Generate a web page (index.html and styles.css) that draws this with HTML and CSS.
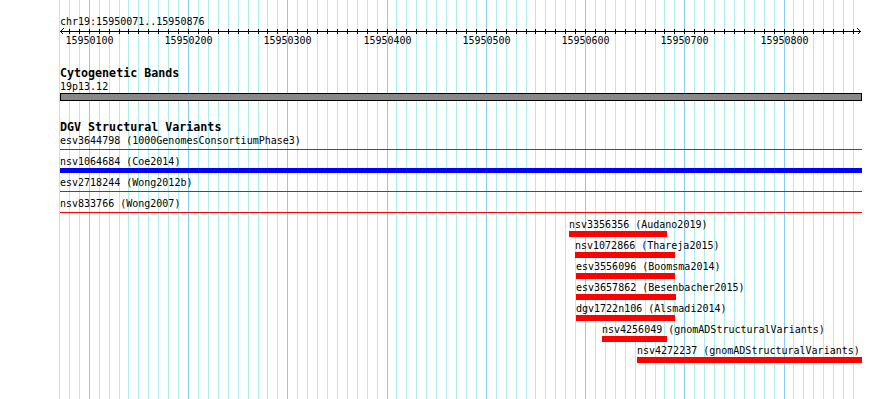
FILE: index.html
```html
<!DOCTYPE html>
<html lang="en">
<head>
    <meta charset="UTF-8">
    <title>chr19:15950071..15950876</title>
    <link rel="stylesheet" href="styles.css">
</head>
<body>
    <div class="browser">
        <div class="grid" id="grid"></div>

        <section class="track ruler-track">
            <div class="label">chr19:15950071..15950876</div>
            <svg class="ruler" id="ruler" width="802" height="20"></svg>
        </section>

        <section class="track band-track">
            <h2 class="track-title">Cytogenetic Bands</h2>
            <div class="label">19p13.12</div>
            <div class="band"></div>
        </section>

        <section class="track sv-track">
            <h2 class="track-title">DGV Structural Variants</h2>

            <div class="sv">
                <div class="label">esv3644798 (1000GenomesConsortiumPhase3)</div>
                <div class="sv-line"></div>
            </div>
            <div class="sv">
                <div class="label">nsv1064684 (Coe2014)</div>
                <div class="sv-bar gain"></div>
            </div>
            <div class="sv">
                <div class="label">esv2718244 (Wong2012b)</div>
                <div class="sv-line"></div>
            </div>
            <div class="sv">
                <div class="label">nsv833766 (Wong2007)</div>
                <div class="sv-line"></div>
            </div>

            <div class="sv" style="margin-left: 509px; width: 98px;">
                <div class="label">nsv3356356 (Audano2019)</div>
                <div class="sv-bar"></div>
            </div>
            <div class="sv" style="margin-left: 515px; width: 100px;">
                <div class="label">nsv1072866 (Thareja2015)</div>
                <div class="sv-bar"></div>
            </div>
            <div class="sv" style="margin-left: 516px; width: 99px;">
                <div class="label">esv3556096 (Boomsma2014)</div>
                <div class="sv-bar"></div>
            </div>
            <div class="sv" style="margin-left: 516px; width: 100px;">
                <div class="label">esv3657862 (Besenbacher2015)</div>
                <div class="sv-bar"></div>
            </div>
            <div class="sv" style="margin-left: 516px; width: 99px;">
                <div class="label">dgv1722n106 (Alsmadi2014)</div>
                <div class="sv-bar"></div>
            </div>
            <div class="sv" style="margin-left: 542px; width: 65px;">
                <div class="label">nsv4256049 (gnomADStructuralVariants)</div>
                <div class="sv-bar"></div>
            </div>
            <div class="sv" style="margin-left: 577px; width: 225px;">
                <div class="label">nsv4272237 (gnomADStructuralVariants)</div>
                <div class="sv-bar"></div>
            </div>
        </section>
    </div>

    <script src="script.js"></script>
</body>
</html>
```

FILE: styles.css
```css
body {
    margin: 0;
    background: #fff;
    color: #000;
    font-family: "DejaVu Sans Mono", "Liberation Mono", monospace;
    font-size: 10px;
    line-height: 13px;
}

.browser {
    position: relative;
    width: 802px;
    min-height: 399px;
    padding-left: 60px;
    overflow: hidden;
}

/* vertical grid behind all tracks */
.grid {
    position: absolute;
    top: 0;
    bottom: 0;
    left: 0;
    right: 0;
    z-index: 0;
}

.grid-line {
    position: absolute;
    top: 0;
    bottom: 0;
    width: 1px;
    background: #afeeee;
}

.grid-line.major {
    background: #87cefa;
}

.track {
    position: relative;
    z-index: 1;
}

.track-title {
    margin: 0;
    font-size: 11.67px;
    font-weight: bold;
    line-height: 13px;
}

.label {
    height: 13px;
    white-space: nowrap;
}

/* ruler */
.ruler-track {
    padding-top: 15px;
}

.ruler {
    display: block;
    overflow: visible;
    shape-rendering: crispEdges;
}

.ruler line,
.ruler polyline {
    stroke: #000;
    stroke-width: 1;
    fill: none;
}

.ruler text {
    font-family: "DejaVu Sans Mono", "Liberation Mono", monospace;
    font-size: 10px;
    fill: #000;
}

/* cytoband */
.band-track {
    margin-top: 19px;
}

.band {
    height: 6px;
    border: 1px solid #000;
    background: #888;
}

/* structural variants */
.sv-track {
    margin-top: 20px;
}

.sv {
    height: 21px;
}

.sv-line {
    height: 1px;
    margin-top: 2px;
    background: #f00;
}

.sv-bar {
    height: 6px;
    background: #f00;
}

.sv-bar.gain {
    height: 5px;
    background: #00f;
}
```

FILE: script.js
```js
const start = 15950071;
const end = 15950876;
const origin = 60;
const scale = 800 / (end - start + 1);

const grid = document.getElementById('grid');
const ruler = document.getElementById('ruler');
const ns = 'http://www.w3.org/2000/svg';

function toX(bp) {
    return Math.round(origin + (bp - start) * scale);
}

function svgEl(name, attrs, text) {
    const el = document.createElementNS(ns, name);
    for (const key in attrs) el.setAttribute(key, attrs[key]);
    if (text) el.textContent = text;
    ruler.appendChild(el);
    return el;
}

// ruler baseline with arrows at both ends
svgEl('line', { x1: 0, y1: 3.5, x2: 801, y2: 3.5 });
svgEl('polyline', { points: '3.5,0.5 0.5,3.5 3.5,6.5' });
svgEl('polyline', { points: '797.5,0.5 800.5,3.5 797.5,6.5' });

for (let bp = 15950070; bp <= end; bp += 10) {
    const x = toX(bp);
    const major = bp % 100 === 0;

    const line = document.createElement('div');
    line.className = major ? 'grid-line major' : 'grid-line';
    line.style.left = x + 'px';
    grid.appendChild(line);

    if (x < origin) continue;
    const rx = x - origin + 0.5;
    svgEl('line', { x1: rx, y1: 1, x2: rx, y2: 6 });

    if (major) {
        svgEl('text', { x: rx, y: 16, 'text-anchor': 'middle' }, String(bp));
    }
}
```
